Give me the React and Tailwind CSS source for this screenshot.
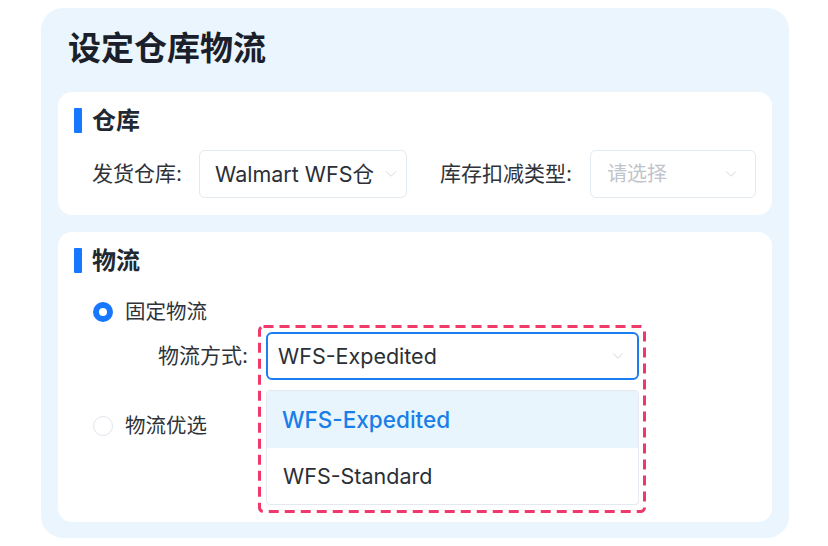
import { ChevronDown } from "lucide-react";

const font = { fontFamily: '"Inter", "Noto Sans CJK SC", sans-serif' };

function SectionTitle({ children }) {
  return (
    <div className="flex items-center h-[25px]">
      <span className="w-[8px] h-[25px] bg-[#1677ff] rounded-[1px]" />
      <span className="ml-[10px] text-[24px] font-bold text-[#222831] leading-none">
        {children}
      </span>
    </div>
  );
}

function Select({ value, placeholder, width, focused, pl, pr }) {
  return (
    <div
      className={`flex items-center justify-between h-[48px] bg-white rounded-[6px] ${
        focused ? "border-2 border-[#1a7ef0]" : "border border-[#e2eaf0]"
      }`}
      style={{ width, paddingLeft: pl, paddingRight: pr }}
    >
      <span
        className={`whitespace-nowrap overflow-hidden ${
          value ? "text-[21.5px] text-[#2b2f36]" : "text-[20px] text-[#bfc4ca]"
        }`}
      >
        {value || placeholder}
      </span>
      <ChevronDown className="w-[18px] h-[18px] text-[#d3d8dd] shrink-0" strokeWidth={1.3} />
    </div>
  );
}

function Radio({ checked, label }) {
  return (
    <div className="flex items-center h-[24px]">
      {checked ? (
        <span className="w-[20px] h-[20px] rounded-full border-[6px] border-[#1677ff] bg-white" />
      ) : (
        <span className="w-[20px] h-[20px] rounded-full border border-[#dfe5ec] bg-white" />
      )}
      <span className="ml-[12px] text-[20.5px] text-[#2f3339]">{label}</span>
    </div>
  );
}

export default function App() {
  return (
    <div className="w-[828px] h-[546px] bg-white pt-[8px] pl-[41px]" style={font}>
      <div className="w-[748px] h-[530px] rounded-[22px] bg-[#eaf5fd] px-[17px] pt-[20px]">
        <h1 className="pl-[10px] h-[40px] leading-[40px] text-[33px] font-bold text-[#1a1f2b]">
          设定仓库物流
        </h1>

        {/* 仓库 */}
        <div className="mt-[24px] h-[123px] bg-white rounded-[14px] pl-[16px] pt-[16px]">
          <SectionTitle>仓库</SectionTitle>
          <div className="mt-[17px] ml-[18px] flex items-center">
            <span className="text-[21px] text-[#2f3339]">发货仓库:</span>
            <div className="ml-[17px]">
              <Select value="Walmart WFS仓" width={208} pl={15} pr={6} />
            </div>
            <span className="ml-[33px] text-[21px] text-[#2f3339]">库存扣减类型:</span>
            <div className="ml-[18px]">
              <Select placeholder="请选择" width={166} pl={16} pr={15} />
            </div>
          </div>
        </div>

        {/* 物流 */}
        <div className="mt-[17px] h-[290px] bg-white rounded-[14px] pl-[16px] pt-[16px]">
          <SectionTitle>物流</SectionTitle>
          <div className="mt-[27px] ml-[19px]">
            <Radio checked label="固定物流" />
          </div>
          <div className="mt-[8px] flex items-center">
            <span className="ml-[84px] w-[90px] text-[21px] text-[#2f3339] whitespace-nowrap">物流方式:</span>
            <div className="ml-[18px] relative">
              <Select value="WFS-Expedited" width={373} focused pl={10} pr={10} />
              <div className="absolute left-0 top-[58px] w-[373px] h-[115px] bg-white border border-[#e3e9ef] rounded-[4px] overflow-hidden">
                <div className="h-[57px] flex items-center pl-[15px] bg-[#e9f5fc] text-[22.5px] font-medium text-[#1a7ee8]">
                  WFS-Expedited
                </div>
                <div className="h-[57px] flex items-center pl-[16px] text-[21.5px] text-[#2b2f36]">
                  WFS-Standard
                </div>
              </div>
              <svg
                className="absolute left-[-8px] top-[-7px] pointer-events-none"
                width="388"
                height="188"
              >
                <rect
                  x="1.5"
                  y="1.5"
                  width="385"
                  height="185"
                  rx="4"
                  fill="none"
                  stroke="#f0386b"
                  strokeWidth="3"
                  strokeDasharray="10 6"
                />
              </svg>
            </div>
          </div>
          <div className="mt-[34px] ml-[19px]">
            <Radio label="物流优选" />
          </div>
        </div>
      </div>
    </div>
  );
}
